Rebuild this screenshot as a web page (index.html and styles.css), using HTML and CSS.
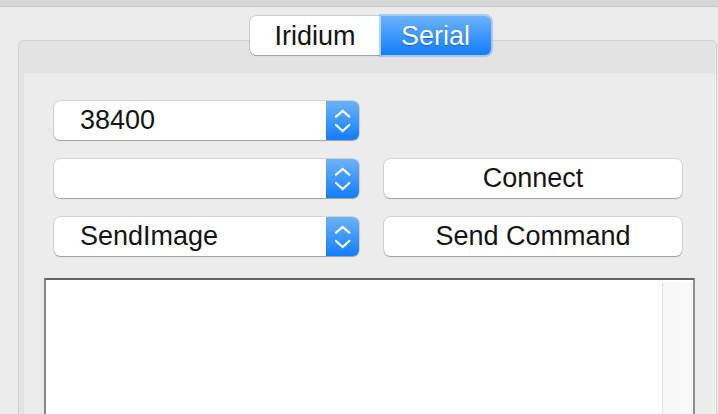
FILE: index.html
```html
<!DOCTYPE html>
<html lang="en">
<head>
  <meta charset="UTF-8">
  <meta name="viewport" content="width=device-width, initial-scale=1">
  <title>Modem Console</title>
  <link rel="stylesheet" href="styles.css">
</head>
<body>

  <div class="titlebar"></div>

  <!-- Tab switcher sits across the top edge of the tab view -->
  <div class="tabs">
    <div class="tab">Iridium</div>
    <div class="tab active">Serial</div>
  </div>

  <div class="tabview">
    <div class="pane">

      <div class="controls">
        <div class="popup">
          <span class="popup-value">38400</span>
          <span class="stepper">
            <svg width="33" height="39" viewBox="0 0 33 39"><path d="M10 15.7 L16.7 10 L23.3 15.7 M10 24 L16.7 30 L23.3 24" /></svg>
          </span>
        </div>
        <div></div>

        <div class="popup">
          <span class="popup-value"></span>
          <span class="stepper">
            <svg width="33" height="39" viewBox="0 0 33 39"><path d="M10 15.7 L16.7 10 L23.3 15.7 M10 24 L16.7 30 L23.3 24" /></svg>
          </span>
        </div>
        <div class="btn">Connect</div>

        <div class="popup">
          <span class="popup-value">SendImage</span>
          <span class="stepper">
            <svg width="33" height="39" viewBox="0 0 33 39"><path d="M10 15.7 L16.7 10 L23.3 15.7 M10 24 L16.7 30 L23.3 24" /></svg>
          </span>
        </div>
        <div class="btn">Send Command</div>
      </div>

      <!-- Serial output log -->
      <div class="console">
        <div class="scroll-track"></div>
      </div>

    </div>
  </div>

</body>
</html>
```

FILE: styles.css
```css
:root {
  --bg: #ececec;
  --band: #e3e3e3;
  --text: #141414;
  --blue-top: #6cb3fa;
  --blue-bottom: #127dfc;
  --control-border: rgba(0, 0, 0, 0.2);
}

* {
  box-sizing: border-box;
  margin: 0;
  padding: 0;
}

html, body {
  height: 100%;
  overflow: hidden;
}

body {
  font-family: "Liberation Sans", Arial, sans-serif;
  font-size: 27px;
  color: var(--text);
  background: var(--bg);
}

.titlebar {
  height: 7px;
  background: #d7d7d7;
  border-bottom: 1px solid #c6c6c6;
}

/* segmented control */
.tabs {
  position: relative;
  z-index: 1;
  display: flex;
  justify-content: center;
  margin-top: 9px;
  padding-left: 22px;
}

.tab {
  height: 39px;
  line-height: 40px;
  text-align: center;
  background: #fff;
  box-shadow: 0 0 0 0.5px rgba(0, 0, 0, 0.25), 0 1px 1px rgba(0, 0, 0, 0.2);
}

.tab:first-child {
  width: 131px;
  border-radius: 6px 0 0 6px;
}

.tab.active {
  width: 110px;
  color: #fff;
  border-radius: 0 6px 6px 0;
  background: linear-gradient(to bottom, var(--blue-top), var(--blue-bottom));
  text-shadow: 0 1px 1px rgba(0, 50, 140, 0.45);
  box-shadow: 0 0 0 2px rgba(120, 175, 240, 0.55);
}

.tabview {
  margin: -15px 1px 0 18px;
  height: 374px;
  padding: 32px 0 0 5px;
  background: var(--band);
  border: 1px solid #d2d2d2;
  border-bottom: 0;
  border-radius: 6px 6px 0 0;
}

.pane {
  height: 100%;
  background: var(--bg);
  padding: 28px 0 0 20px;
}

.controls {
  display: grid;
  grid-template-columns: 305px 298px;
  grid-auto-rows: 39px;
  column-gap: 25px;
  row-gap: 19px;
  margin-left: 10px;
}

.popup {
  display: flex;
  background: #fff;
  border-radius: 6px;
  box-shadow: 0 0 0 0.5px var(--control-border), 0 1px 1px rgba(0, 0, 0, 0.25);
}

.popup-value {
  flex: 1;
  padding-left: 26px;
  line-height: 39px;
}

.stepper {
  width: 33px;
  border-radius: 0 6px 6px 0;
  background: linear-gradient(to bottom, var(--blue-top), var(--blue-bottom));
}

.stepper svg {
  display: block;
}

.stepper path {
  fill: none;
  stroke: #fff;
  stroke-width: 2.2;
  stroke-linecap: round;
}

.btn {
  background: #fff;
  border-radius: 6px;
  text-align: center;
  line-height: 39px;
  box-shadow: 0 0 0 0.5px var(--control-border), 0 1px 1px rgba(0, 0, 0, 0.25);
}

.console {
  display: flex;
  justify-content: flex-end;
  width: 651px;
  height: 136px;
  margin-top: 22px;
  padding: 2px 1px 0 0;
  background: #fff;
  border-top: 2px solid #646464;
  border-left: 2px solid #878787;
  border-right: 2px solid #8d8d8d;
}

.scroll-track {
  width: 30px;
  background: linear-gradient(to right, #f7f7f7, #fafafa);
  border-left: 1px solid #e2e2e2;
  border-right: 1px solid #ececec;
}
```
